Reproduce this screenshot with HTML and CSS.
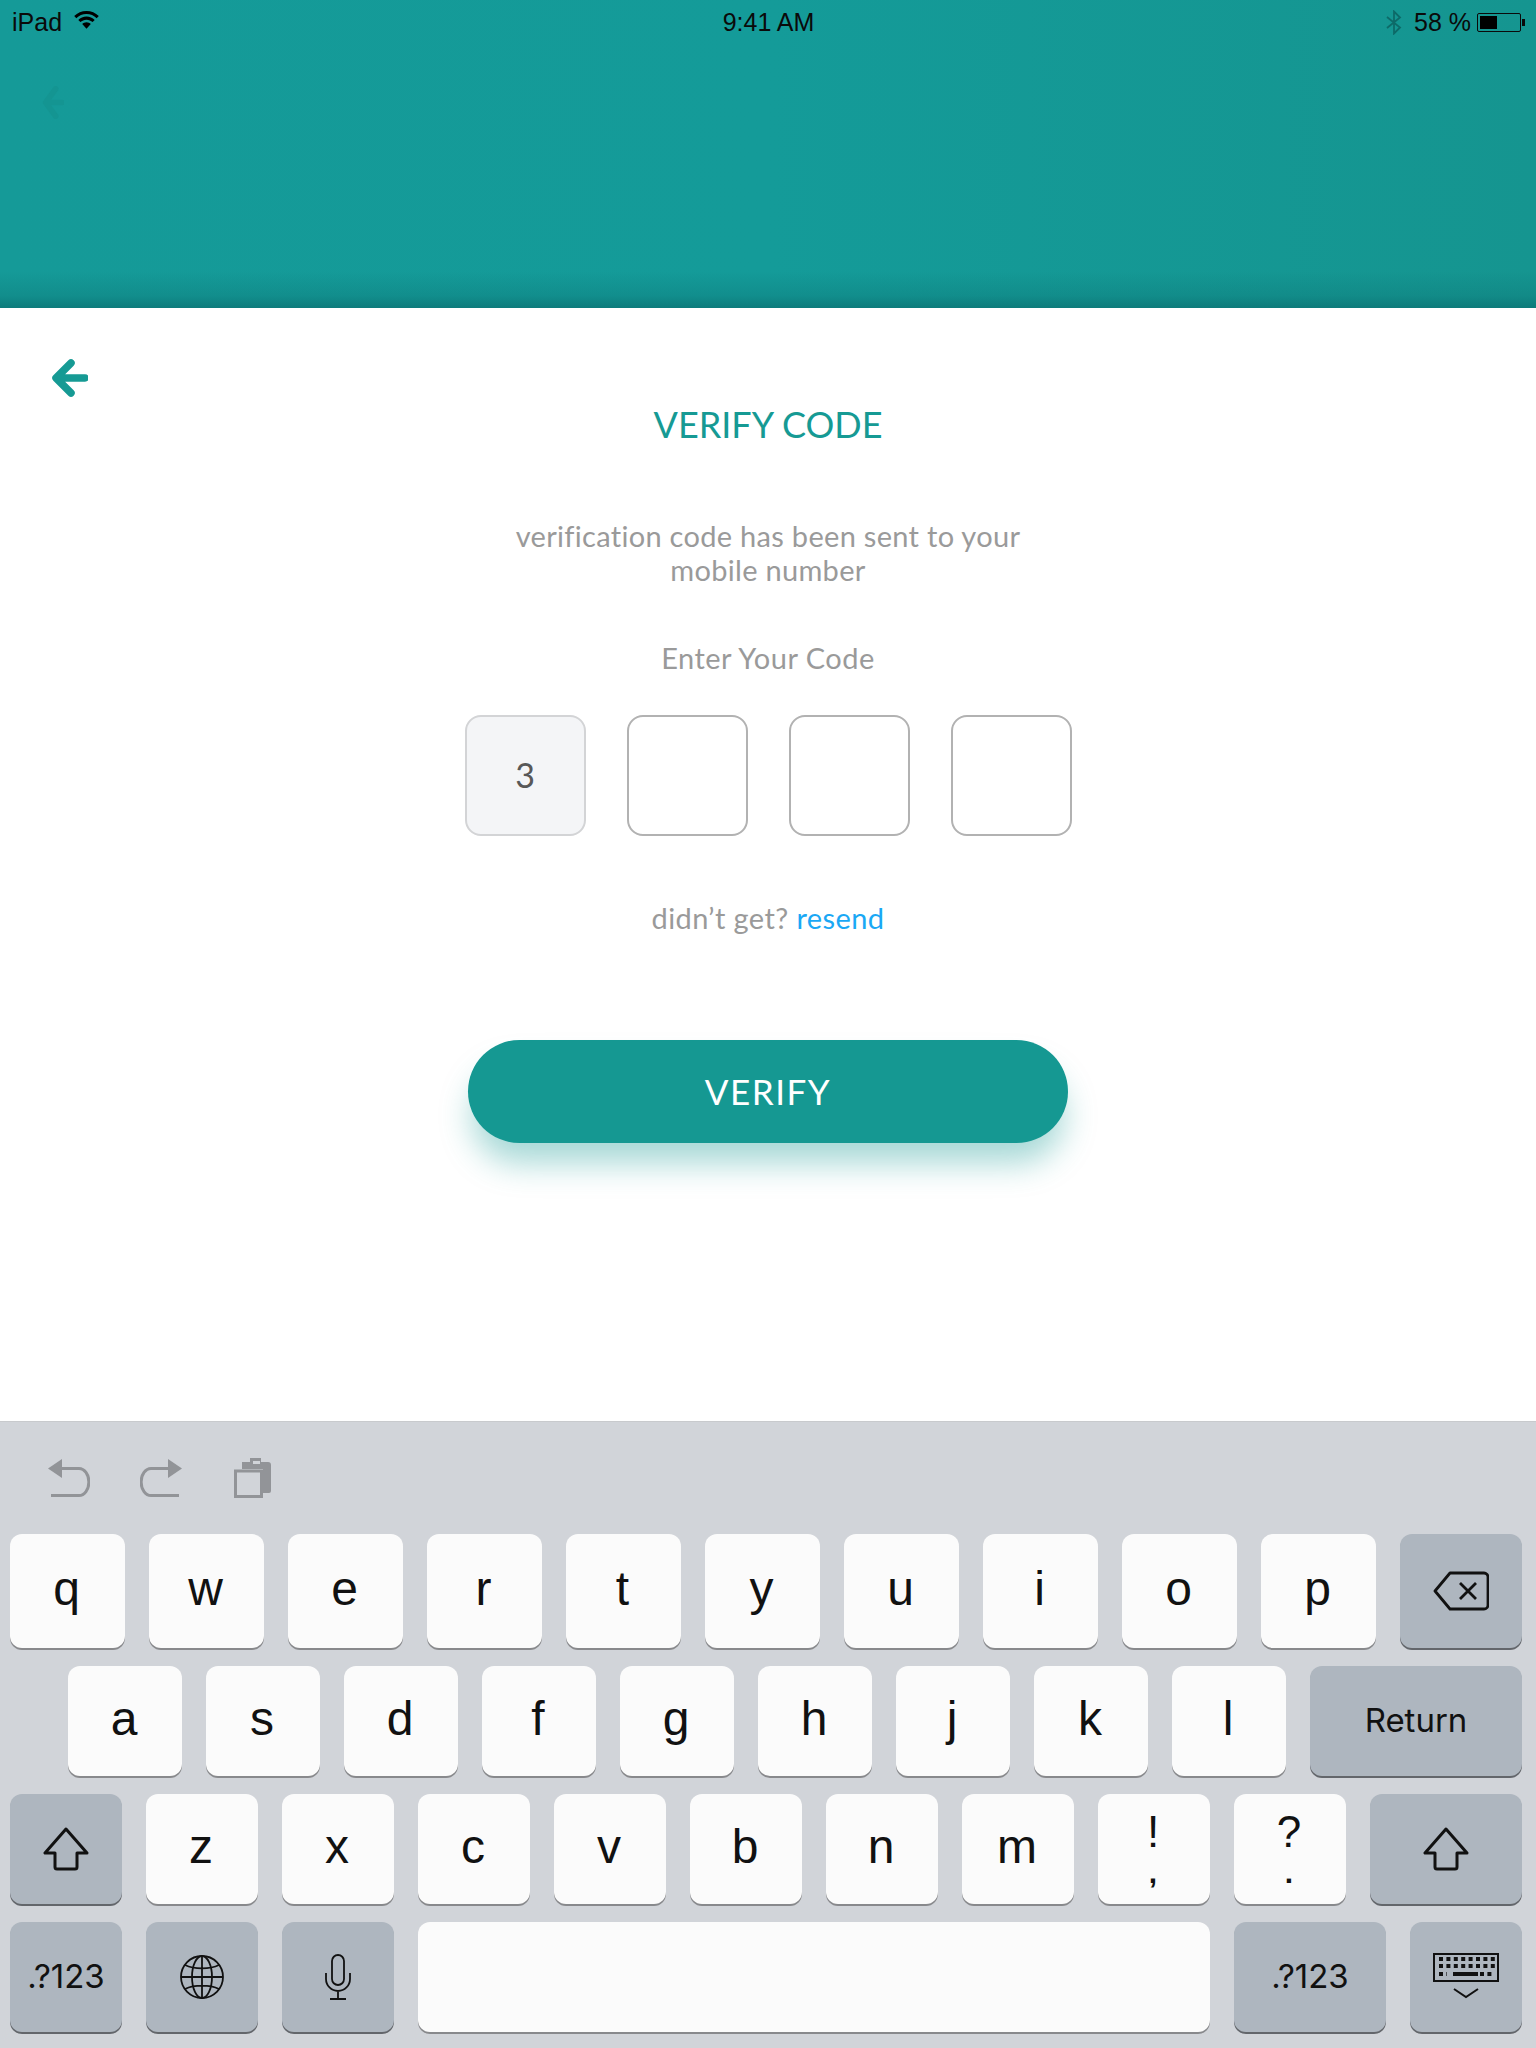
FILE: index.html
```html
<!DOCTYPE html>
<html lang="en">
<head>
    <meta charset="UTF-8">
    <meta name="viewport" content="width=device-width, initial-scale=1.0">
    <title>Verify Code</title>
    <link rel="stylesheet" href="styles.css">
</head>
<body>
    <header class="hero">
        <div class="status-bar">
            <div class="status-left">
                <span>iPad</span>
                <svg class="wifi" viewBox="0 0 25 18"><path d="M12.5 0C7.7 0 3.4 1.9.2 5l2.1 2.2C5 4.700 8.600 3.100 12.500 3.100s7.500 1.600 10.200 4.100L24.800 5C21.600 1.900 17.300 0 12.500 0z"/><path d="M12.500 5.600c-3.200 0-6.100 1.300-8.200 3.300l2.100 2.200c1.600-1.500 3.700-2.400 6.100-2.400s4.500.9 6.100 2.400l2.100-2.200c-2.100-2-5-3.300-8.200-3.300z"/><path d="M12.500 11.300c-1.700 0-3.200.7-4.300 1.700l4.300 4.700 4.300-4.700c-1.100-1-2.600-1.700-4.300-1.700z"/></svg>
            </div>
            <div class="status-time">9:41 AM</div>
            <div class="status-right">
                <svg class="bluetooth" viewBox="0 0 16 25"><path d="M1 7l13 10.500L8 23.500V1.500l6 6L1 18" fill="none" stroke="currentColor" stroke-width="1.800"/></svg>
                <span class="battery-text">58 %</span>
                <div class="battery"><div class="battery-fill"></div></div>
                <div class="battery-nub"></div>
            </div>
        </div>
        <svg class="ghost-arrow" viewBox="0 0 24 36"><path d="M15 3L4 18l11 15M5 18h17" fill="none" stroke="currentColor" stroke-width="6" stroke-linecap="round" stroke-linejoin="round"/></svg>
    </header>

    <main class="content">
        <a class="back" href="#">
            <svg viewBox="0 0 38 38" width="38" height="38"><path d="M21 4L6 19l15 15M8 19h27" fill="none" stroke="#169a94" stroke-width="7.500" stroke-linecap="round" stroke-linejoin="round"/></svg>
        </a>
        <h1 class="title">VERIFY CODE</h1>
        <p class="message">verification code has been sent to your<br>mobile number</p>
        <p class="enter-label">Enter Your Code</p>
        <div class="code-boxes">
            <div class="code-box filled">3</div>
            <div class="code-box"></div>
            <div class="code-box"></div>
            <div class="code-box"></div>
        </div>
        <p class="resend">didn’t get? <a href="#">resend</a></p>
        <button class="verify-btn">VERIFY</button>
    </main>

    <section class="keyboard">
        <div class="kb-tools">
            <svg class="tool" viewBox="0 0 42 38"><path d="M14 0L0 9.500 14 19z" fill="#929498"/><path d="M10 9.500h21a9.500 13 0 0 1 0 27H3" fill="none" stroke="#929498" stroke-width="3"/></svg>
            <svg class="tool" viewBox="0 0 42 38"><path d="M28 0l14 9.500L28 19z" fill="#929498"/><path d="M32 9.500H11a9.500 13 0 0 0 0 27h28" fill="none" stroke="#929498" stroke-width="3"/></svg>
            <svg class="tool paste" viewBox="0 0 38 40"><path d="M8 4h8V0h11v4h7a3 3 0 0 1 3 3v26a2 2 0 0 1-2 2h-6V11H8z" fill="#929498"/><rect x="19" y="3" width="7" height="3" fill="#d1d4d9"/><rect x="1.500" y="13" width="26" height="25.500" fill="none" stroke="#929498" stroke-width="3"/></svg>
        </div>
        <div class="kb-row">
            <div class="key">q</div><div class="key">w</div><div class="key">e</div><div class="key">r</div><div class="key">t</div><div class="key">y</div><div class="key">u</div><div class="key">i</div><div class="key">o</div><div class="key">p</div>
            <div class="key dark backspace">
                <svg viewBox="0 0 56 40" width="56" height="40"><path d="M17 2h34a4 4 0 0 1 4 4v28a4 4 0 0 1-4 4H17L2 20z" fill="none" stroke="#111" stroke-width="2.800" stroke-linejoin="round"/><path d="M27 12l16 16M43 12L27 28" fill="none" stroke="#111" stroke-width="2.800"/></svg>
            </div>
        </div>
        <div class="kb-row row-two">
            <div class="key">a</div><div class="key">s</div><div class="key">d</div><div class="key">f</div><div class="key">g</div><div class="key">h</div><div class="key">j</div><div class="key">k</div><div class="key">l</div>
            <div class="key dark label return">Return</div>
        </div>
        <div class="kb-row row-three">
            <div class="key dark">
                <svg class="shift" viewBox="0 0 46 44"><path d="M23 2L2 26h10v14a2 2 0 0 0 2 2h18a2 2 0 0 0 2-2V26h10z" fill="none" stroke="#111" stroke-width="3" stroke-linejoin="round"/></svg>
            </div>
            <div class="key">z</div><div class="key">x</div><div class="key">c</div><div class="key">v</div><div class="key">b</div><div class="key">n</div><div class="key">m</div>
            <div class="key punct"><span class="punct-top">!</span><span class="punct-bottom">,</span></div>
            <div class="key punct"><span class="punct-top">?</span><span class="punct-bottom">.</span></div>
            <div class="key dark shift-right">
                <svg class="shift" viewBox="0 0 46 44"><path d="M23 2L2 26h10v14a2 2 0 0 0 2 2h18a2 2 0 0 0 2-2V26h10z" fill="none" stroke="#111" stroke-width="3" stroke-linejoin="round"/></svg>
            </div>
        </div>
        <div class="kb-row row-four">
            <div class="key dark label">.?123</div>
            <div class="key dark">
                <svg viewBox="0 0 44 44" width="44" height="44" fill="none" stroke="#111" stroke-width="1.800"><circle cx="22" cy="22" r="21"/><ellipse cx="22" cy="22" rx="10" ry="21"/><path d="M22 1v42M1 22h42M5 10c9 4.500 25 4.500 34 0M5 34c9-4.500 25-4.500 34 0"/></svg>
            </div>
            <div class="key dark">
                <svg viewBox="0 0 26 46" width="26" height="46" fill="none" stroke="#111" stroke-width="1.800"><rect x="7" y="1" width="12" height="30" rx="6"/><path d="M1 19v6a12 12 0 0 0 24 0v-6M13 37v8M5 45h16"/></svg>
            </div>
            <div class="key space"></div>
            <div class="key dark label wide">.?123</div>
            <div class="key dark">
                <svg viewBox="0 0 66 48" width="66" height="48">
                    <rect x="1" y="1" width="64" height="27" fill="none" stroke="#111" stroke-width="2"/>
                    <path d="M6 6h58M6 13h58" fill="none" stroke="#111" stroke-width="4" stroke-dasharray="4 3.400"/>
                    <path d="M6 21h8M47 21h14" fill="none" stroke="#111" stroke-width="4" stroke-dasharray="4 3.400"/>
                    <path d="M20 21h25" fill="none" stroke="#111" stroke-width="4"/>
                    <path d="M21 36l12 8 12-8" fill="none" stroke="#111" stroke-width="2"/>
                </svg>
            </div>
        </div>
    </section>
</body>
</html>
```

FILE: styles.css
```css
* {
    box-sizing: border-box;
}

body {
    margin: 0;
    height: 2048px;
    display: flex;
    flex-direction: column;
    overflow: hidden;
    background: #fff;
    font-family: Lato, "Open Sans", sans-serif;
}

/* top teal band */
.hero {
    position: relative;
    height: 308px;
    background: linear-gradient(180deg, rgba(12, 118, 118, 0) 88%, rgba(12, 118, 118, 0.35) 96%, rgba(12, 118, 118, 0.85) 100%),
        linear-gradient(90deg, #159a98 0%, #149b99 50%, #159590 100%);
}

.status-bar {
    display: grid;
    grid-template-columns: 1fr auto 1fr;
    align-items: center;
    height: 44px;
    padding: 0 11px 0 12px;
    font-family: "Liberation Sans", Arial, sans-serif;
    font-size: 25px;
    color: #0a0a0a;
}

.status-left {
    display: flex;
    align-items: center;
    gap: 12px;
}

.wifi {
    width: 25px;
    height: 18px;
    margin-top: -4px;
    fill: #000;
}

.status-right {
    display: flex;
    align-items: center;
    justify-content: flex-end;
}

.bluetooth {
    width: 16px;
    height: 25px;
    margin-right: 12px;
    color: #0d6a68;
}

.battery-text {
    margin-right: 6px;
}

.battery {
    width: 44px;
    height: 19px;
    padding: 2px;
    border: 1px solid #0a0a0a;
    border-radius: 2px;
}

.battery-fill {
    width: 17px;
    height: 100%;
    background: #000;
}

.battery-nub {
    width: 3px;
    height: 7px;
    margin-left: 1px;
    background: #0a0a0a;
}

.ghost-arrow {
    position: absolute;
    left: 42px;
    top: 86px;
    width: 22px;
    height: 33px;
    color: #149592;
}

.content {
    flex: 1;
    display: flex;
    flex-direction: column;
    align-items: center;
    padding-top: 51px;
    color: #9a9a9a;
}

.back {
    align-self: flex-start;
    display: block;
    height: 38px;
    margin-left: 50px;
}

.title {
    margin: 5px 0 0;
    font-size: 36px;
    line-height: 44px;
    font-weight: 400;
    color: #169a94;
}

.message {
    margin: 73px 0 0;
    font-size: 29px;
    line-height: 34px;
    letter-spacing: 0.3px;
    text-align: center;
}

.enter-label {
    margin: 54px 0 0;
    font-size: 29px;
    line-height: 34px;
    letter-spacing: 0.5px;
}

.code-boxes {
    display: flex;
    gap: 41px;
    margin-top: 40px;
}

.code-box {
    display: flex;
    align-items: center;
    justify-content: center;
    width: 121px;
    height: 121px;
    padding-bottom: 3px;
    border: 2px solid #b2b2b2;
    border-radius: 16px;
    font-size: 34px;
    color: #585858;
}

.code-box.filled {
    background: #f4f5f7;
    border-color: #d3d4d6;
}

.resend {
    margin: 65px 0 0;
    font-size: 29px;
    line-height: 34px;
    letter-spacing: 0.4px;
}

.resend a {
    color: #1aa8f5;
    text-decoration: none;
}

.verify-btn {
    width: 600px;
    height: 103px;
    margin-top: 105px;
    padding-bottom: 3px;
    border: 0;
    border-radius: 52px;
    background: #159892;
    box-shadow: 0 24px 32px -4px rgba(21, 152, 146, 0.38);
    font-family: inherit;
    font-size: 35px;
    letter-spacing: 1.5px;
    color: #fff;
}

/* iPad keyboard */
.keyboard {
    height: 626px;
    padding: 0 14px 0 10px;
    background: #d1d4d9;
    box-shadow: 0 -1px 0 #c8cacd;
    font-family: "Liberation Sans", Arial, sans-serif;
    color: #111;
}

.kb-tools {
    display: flex;
    align-items: center;
    gap: 50px;
    height: 112px;
    padding: 0 0 0 38px;
}

.tool {
    width: 42px;
    height: 38px;
}

.tool.paste {
    width: 38px;
    height: 40px;
    margin-left: 2px;
}

.kb-row {
    display: flex;
    gap: 24px;
    margin-bottom: 18px;
}

.key {
    flex: 0 0 115px;
    height: 114px;
    display: flex;
    align-items: center;
    justify-content: center;
    padding: 0 2px 6px 0;
    border-radius: 12px;
    background: #fbfbfb;
    box-shadow: 0 2px 0 #88898c;
    font-size: 48px;
}

.key.dark {
    padding: 0;
    background: #aeb6bf;
    box-shadow: 0 2px 0 #63666b;
}

.backspace {
    flex-basis: 122px;
}

.row-two {
    padding-left: 58px;
}

.row-two .key {
    flex-basis: 114px;
    height: 110px;
}

.row-two .key.return {
    flex-basis: 212px;
}

.row-three .key,
.row-four .key {
    flex-basis: 112px;
    height: 110px;
}

.row-three .key.shift-right {
    flex-basis: 152px;
}

.shift {
    width: 46px;
    height: 44px;
}

.key.label {
    padding-bottom: 2px;
    font-family: Inter, "Liberation Sans", sans-serif;
    font-size: 33px;
}

.key.punct {
    flex-direction: column;
    justify-content: flex-start;
    padding-top: 16px;
    padding-bottom: 0;
}

.punct-top {
    font-size: 44px;
    line-height: 44px;
}

.punct-bottom {
    margin-top: 2px;
    font-size: 30px;
    line-height: 34px;
    font-weight: 700;
}

.row-four .key.space {
    flex-basis: 792px;
}

.row-four .key.wide {
    flex-basis: 152px;
}
```
